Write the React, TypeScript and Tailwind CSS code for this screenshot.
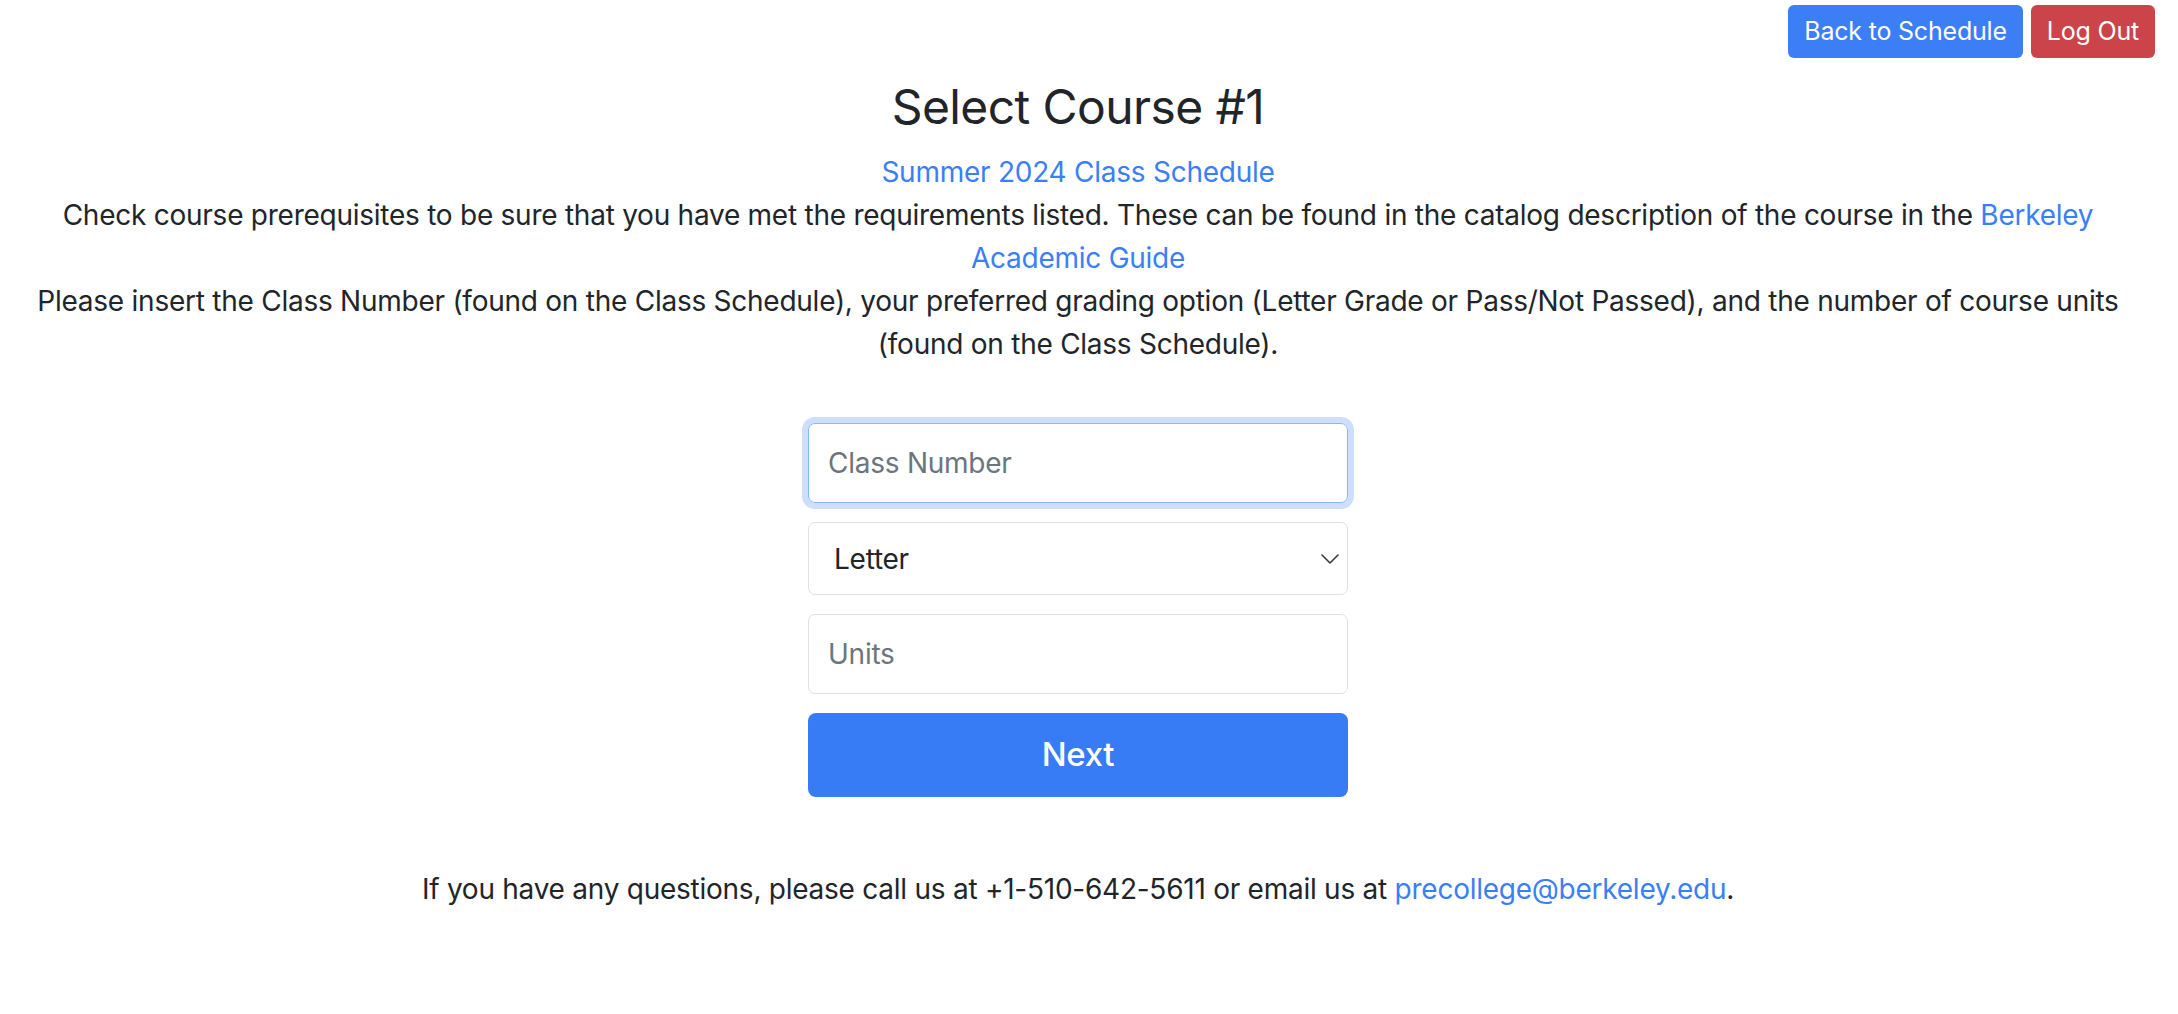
import { useState } from "react"

function Chevron() {
  return (
    <svg
      className="pointer-events-none absolute right-[9px] top-1/2 -translate-y-1/2"
      width="18"
      height="10"
      viewBox="0 0 18 10"
      fill="none"
    >
      <path d="M1 1l8 8 8-8" stroke="#343a40" strokeWidth="1.6" strokeLinecap="round" strokeLinejoin="round" />
    </svg>
  )
}

export default function App() {
  const [grading, setGrading] = useState("Letter")

  return (
    <div className="min-h-screen bg-white pr-[22px] font-['Inter','Helvetica_Neue',Arial,sans-serif] text-[#212529]">
      <div className="flex justify-end gap-[8px] pt-[5px] pr-[1px]">
        <button className="h-[53px] rounded-[6px] bg-[#3b7ef6] px-[16px] text-[25px] tracking-[-0.2px] text-white">
          Back to Schedule
        </button>
        <button className="h-[53px] rounded-[6px] bg-[#cb444a] px-[16px] text-[25px] tracking-[-0.2px] text-white">
          Log Out
        </button>
      </div>

      <div className="px-[20px] text-center text-[28px] leading-[43px] tracking-[-0.25px]">
        <h1 className="mt-[25px] mb-[20px] text-[48px] leading-[48px] font-normal tracking-[-0.6px]">
          Select Course #1
        </h1>
        <div>
          <a href="#" className="text-[#3a7ff6]">
            Summer 2024 Class Schedule
          </a>
        </div>
        <p>
          Check course prerequisites to be sure that you have met the requirements listed. These can be found in
          the catalog description of the course in the{" "}
          <a href="#" className="text-[#3a7ff6]">
            Berkeley Academic Guide
          </a>
        </p>
        <p>
          Please insert the Class Number (found on the Class Schedule), your preferred grading option (Letter Grade
          or Pass/Not Passed), and the number of course units (found on the Class Schedule).
        </p>
      </div>

      <form className="mx-auto mt-[57px] flex w-[540px] flex-col gap-[19px]" onSubmit={(e) => e.preventDefault()}>
        <input
          autoFocus
          placeholder="Class Number"
          className="h-[80px] w-full rounded-[7px] border border-[#86b7fe] px-[19px] text-[28px] tracking-[-0.25px] text-[#212529] shadow-[0_0_0_6px_#cddffc] outline-none placeholder:text-[#6c757d]"
        />
        <div className="relative">
          <select
            value={grading}
            onChange={(e) => setGrading(e.target.value)}
            className="h-[73px] w-full appearance-none rounded-[7px] border border-[#dee2e6] bg-white px-[25px] text-[28px] tracking-[-0.25px] text-[#212529] outline-none"
          >
            <option>Letter</option>
            <option>Pass/Not Passed</option>
          </select>
          <Chevron />
        </div>
        <input
          placeholder="Units"
          className="h-[80px] w-full rounded-[7px] border border-[#dee2e6] px-[19px] text-[28px] tracking-[-0.25px] text-[#212529] outline-none placeholder:text-[#6c757d]"
        />
        <button
          type="submit"
          className="h-[84px] w-full rounded-[8px] bg-[#377bf5] text-[33px] font-medium tracking-[-0.3px] text-white"
        >
          Next
        </button>
      </form>

      <p className="mt-[71px] text-center text-[28px] leading-[43px] tracking-[-0.25px]">
        If you have any questions, please call us at +1-510-642-5611 or email us at{" "}
        <a href="#" className="text-[#3a7ff6]">
          precollege@berkeley.edu
        </a>
        .
      </p>
    </div>
  )
}
